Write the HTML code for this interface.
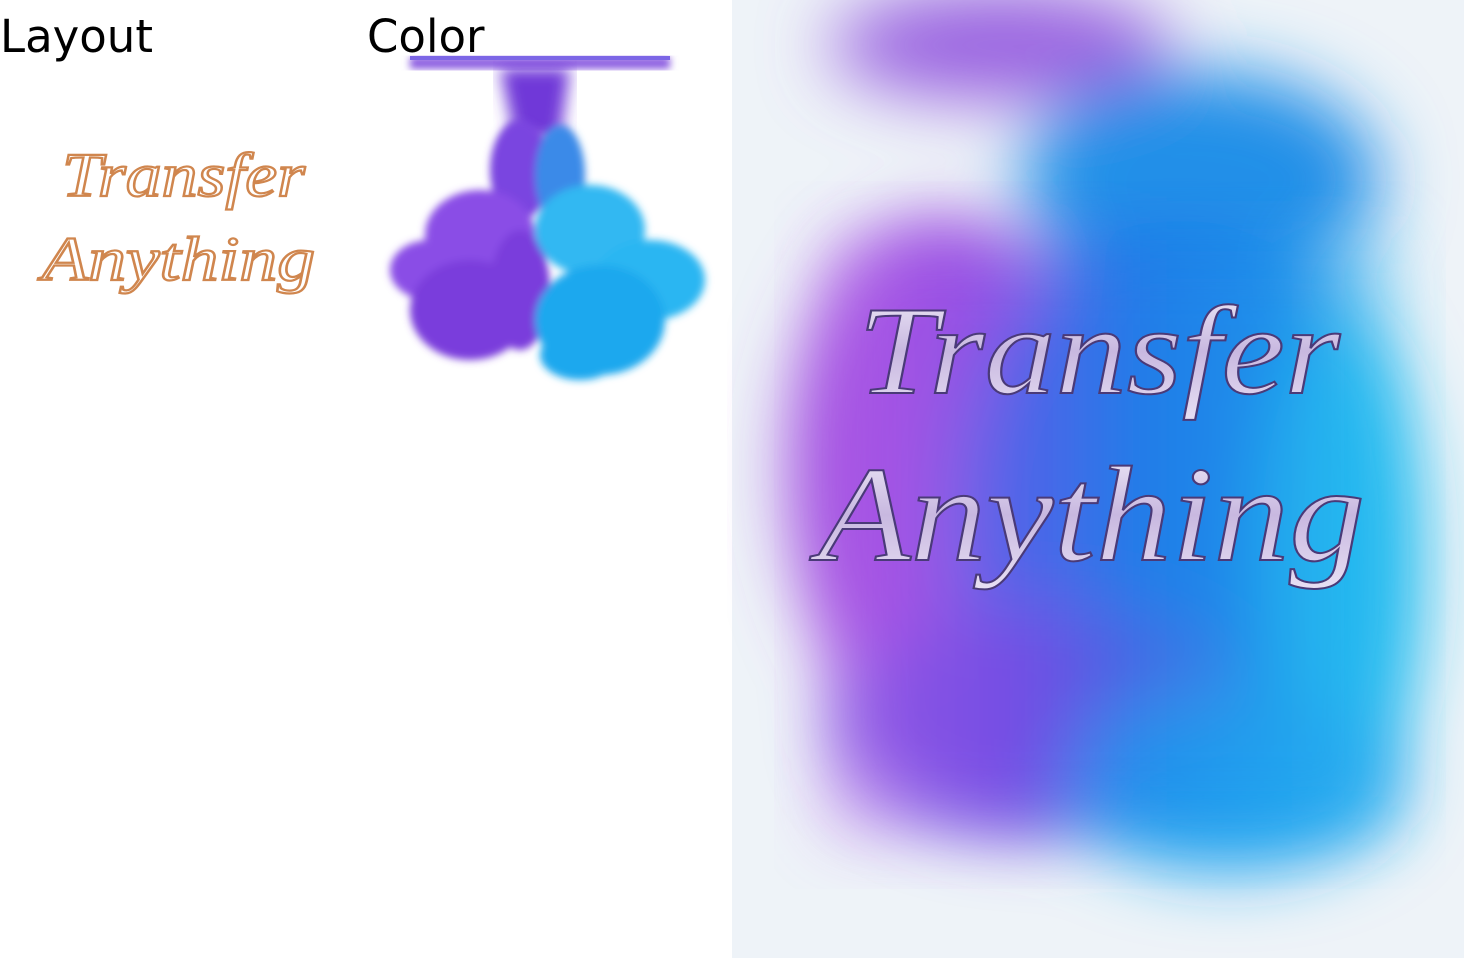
<!DOCTYPE html>
<html><head><meta charset="utf-8"><style>
html,body{margin:0;padding:0;width:1464px;height:958px;overflow:hidden;background:#fff;font-family:"Liberation Sans","DejaVu Sans",sans-serif}
.lbl{position:absolute;top:10px;font-size:45px;color:#000;font-family:"DejaVu Sans","Liberation Sans",sans-serif}
</style></head><body>
<div class="lbl" style="left:0">Layout</div>
<div class="lbl" style="left:367px">Color</div>
<svg style="position:absolute;left:0;top:0" width="1464" height="958">
<defs>
<filter id="b4"><feGaussianBlur stdDeviation="4"/></filter>
<filter id="b8"><feGaussianBlur stdDeviation="8"/></filter>
<filter id="b40"><feGaussianBlur stdDeviation="35"/></filter>
<linearGradient id="g1" x1="0" x2="1"><stop offset="0" stop-color="#b85ee8"/><stop offset="0.35" stop-color="#7a4be8"/><stop offset="0.55" stop-color="#1f7ae8"/><stop offset="1" stop-color="#28b8f0"/></linearGradient>
<linearGradient id="tg" x1="0" y1="0" x2="0" y2="1"><stop offset="0" stop-color="#f2eefa"/><stop offset="0.5" stop-color="#c8b8e0"/><stop offset="1" stop-color="#e8e0f4"/></linearGradient>
</defs>
<!-- ink -->
<rect x="410" y="57" width="260" height="12" fill="#8a5ae0" filter="url(#b4)"/>
<rect x="410" y="56" width="260" height="4" fill="#7c66e6"/>
<path d="M500 68 L570 68 L560 140 L515 140Z" fill="#7038d8" filter="url(#b8)"/>
<g filter="url(#b4)">
<ellipse cx="520" cy="170" rx="30" ry="50" fill="#7a45e0"/>
<ellipse cx="560" cy="175" rx="25" ry="50" fill="#3a8ae8"/>
<ellipse cx="480" cy="235" rx="55" ry="45" fill="#8a4ee6"/>
<ellipse cx="430" cy="270" rx="40" ry="30" fill="#8a4ee6"/>
<ellipse cx="470" cy="310" rx="60" ry="50" fill="#7a3edc"/>
<ellipse cx="520" cy="290" rx="30" ry="60" fill="#7a3edc"/>
<ellipse cx="590" cy="230" rx="55" ry="45" fill="#30b8f2"/>
<ellipse cx="650" cy="280" rx="55" ry="40" fill="#2ab6f2"/>
<ellipse cx="600" cy="320" rx="65" ry="55" fill="#1fa8ee"/>
<ellipse cx="580" cy="355" rx="40" ry="25" fill="#1fa8ee"/>
</g>
<!-- left orange text -->
<g font-family="Liberation Serif,serif" font-style="italic" font-size="62" fill="#fff" stroke="#d0864e" stroke-width="2.2">
<text x="62" y="196" textLength="243" lengthAdjust="spacingAndGlyphs">Transfer</text>
<text x="42" y="280" textLength="273" lengthAdjust="spacingAndGlyphs">Anything</text>
</g>
<!-- right panel -->
<rect x="732" y="0" width="732" height="958" fill="#eef3f8"/>
<g filter="url(#b40)">
<ellipse cx="1000" cy="45" rx="170" ry="55" fill="#9860e0"/>
<ellipse cx="1200" cy="180" rx="180" ry="110" fill="#2090e8"/>
<ellipse cx="940" cy="470" rx="150" ry="250" fill="#a050e0"/>
<ellipse cx="1180" cy="520" rx="230" ry="300" fill="#1a80e8"/>
<ellipse cx="1340" cy="560" rx="80" ry="240" fill="#20c0f0"/>
<ellipse cx="1040" cy="720" rx="200" ry="110" fill="#6a50e0"/>
<ellipse cx="1230" cy="780" rx="170" ry="90" fill="#20a8f0"/>
</g>
<rect x="830" y="240" width="560" height="590" fill="url(#g1)" opacity="0.55" filter="url(#b40)"/>
<g font-family="Liberation Serif,serif" font-style="italic" fill="url(#tg)" stroke="#4a3a78" stroke-width="2">
<text x="858" y="393" font-size="126" textLength="482" lengthAdjust="spacingAndGlyphs">Transfer</text>
<text x="818" y="560" font-size="136" textLength="547" lengthAdjust="spacingAndGlyphs">Anything</text>
</g>
</svg>
</body></html>
